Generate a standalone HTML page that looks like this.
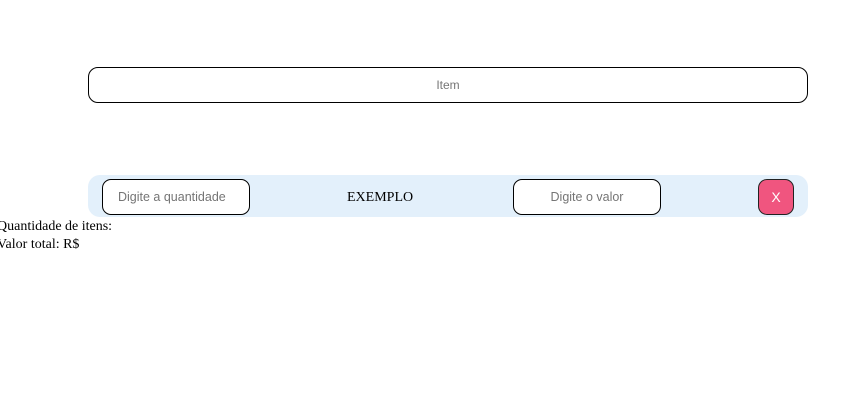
<!DOCTYPE html>
<html><head><meta charset="utf-8"><style>
body{margin:0;width:854px;height:420px;background:#fff;position:relative;overflow:hidden;font-family:"Liberation Serif",serif;}
.item{position:absolute;left:88px;top:67px;width:720px;height:36px;border:1px solid #000;border-radius:10px;box-sizing:border-box;font:12px "Liberation Sans",sans-serif;color:#757575;text-align:center;line-height:34px;}
.row{position:absolute;left:88px;top:175px;width:720px;height:42px;background:#e3f0fb;border-radius:12px;}
.inp{position:absolute;top:4px;width:148px;height:36px;border:1px solid #000;border-radius:9px;background:#fff;box-sizing:border-box;font:12.5px "Liberation Sans",sans-serif;color:#757575;line-height:34px;}
.ex{position:absolute;left:259px;top:15px;font-size:14px;}
.x{position:absolute;left:670px;top:4px;width:36px;height:36px;box-sizing:border-box;border:1px solid #222;border-radius:9px;background:#f0557f;color:#fff;font:14px "Liberation Sans",sans-serif;text-align:center;line-height:34px;}
.t{position:absolute;left:-3px;font-size:14px;line-height:18px;}
</style></head><body>
<div class="item">Item</div>
<div class="row">
<div class="inp" style="left:14px;padding-left:15px">Digite a quantidade</div>
<div class="ex">EXEMPLO</div>
<div class="inp" style="left:425px;text-align:center">Digite o valor</div>
<div class="x">X</div>
</div>
<div class="t" style="top:218px">Quantidade de itens:</div>
<div class="t" style="top:236px">Valor total: R$</div>
</body></html>
